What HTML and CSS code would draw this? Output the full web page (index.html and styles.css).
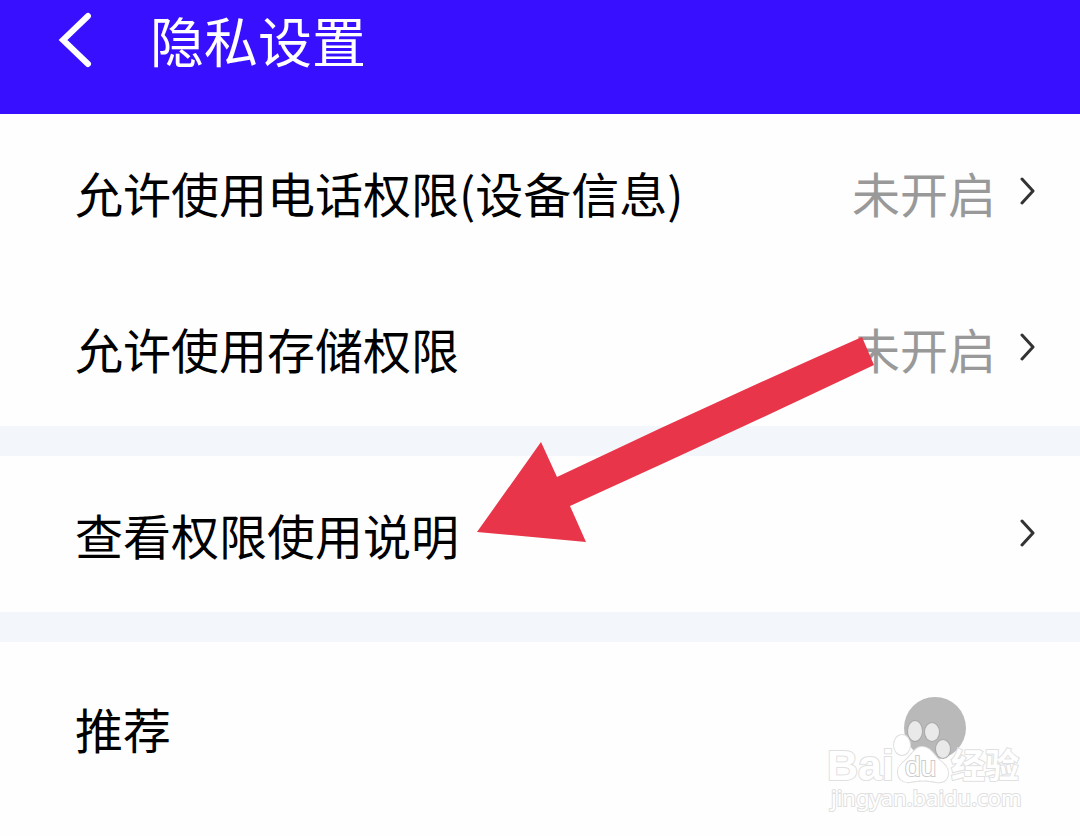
FILE: index.html
```html
<!DOCTYPE html>
<html lang="zh-CN">
<head>
<meta charset="utf-8">
<meta name="viewport" content="width=device-width, initial-scale=1">
<title>隐私设置</title>
<link rel="stylesheet" href="styles.css">
</head>
<body>
<header class="topbar">
  <button class="back" type="button" aria-label="返回">
    <svg class="back-icon" viewBox="0 0 34 56" aria-hidden="true"><path d="M30 4L5 28l25 24"/></svg>
  </button>
  <h1 class="title">隐私设置</h1>
</header>
<main class="settings">
  <section class="group">
    <button class="row" type="button">
      <span class="label">允许使用电话权限(设备信息)</span>
      <span class="status">未开启</span>
      <svg class="chevron" viewBox="0 0 18 30" aria-hidden="true"><path d="M4 2l11 12L4 26"/></svg>
    </button>
    <button class="row" type="button">
      <span class="label">允许使用存储权限</span>
      <span class="status">未开启</span>
      <svg class="chevron" viewBox="0 0 18 30" aria-hidden="true"><path d="M4 2l11 12L4 26"/></svg>
    </button>
  </section>
  <section class="group">
    <button class="row" type="button">
      <span class="label">查看权限使用说明</span>
      <svg class="chevron" viewBox="0 0 18 30" aria-hidden="true"><path d="M4 2l11 12L4 26"/></svg>
    </button>
  </section>
  <section class="group">
    <label class="row row-switch">
      <span class="label">推荐</span>
      <input class="switch" type="checkbox">
    </label>
  </section>
</main>
<svg class="arrow" viewBox="0 0 400 208" aria-hidden="true"><path d="M1 196L65 106L81 141Q232 69 386 1L398 29Q246 101 94 170L110 206Z"/></svg>
<svg class="watermark" viewBox="0 0 200 120" role="img" aria-label="Baidu 经验 jingyan.baidu.com">
  <g class="mark">
    <path d="M92 52c8 0 11 7 16 12c6 5 10 8 10 14c0 8-6 10-12 9c-8-2-18-2-26 0c-8 1-12-4-12-10c0-6 5-9 10-14c5-5 8-11 14-11z"/>
    <ellipse cx="72" cy="50" rx="8" ry="10"/>
    <ellipse class="toe" cx="85" cy="36" rx="7" ry="10"/>
    <ellipse class="toe" cx="102" cy="37" rx="7" ry="9"/>
    <ellipse class="toe" cx="113" cy="54" rx="7" ry="9"/>
  </g>
  <text class="brand" x="-3" y="85">Bai</text>
  <text class="du" x="75" y="81">du</text>
  <text class="jingyan" x="121" y="83">经验</text>
  <text class="site" x="1" y="111">jingyan.baidu.com</text>
</svg>
</body>
</html>
```
FILE: styles.css
```css
* {
  box-sizing: border-box;
}

body {
  position: relative;
  min-height: 100vh;
  margin: 0;
  background: #fefefe;
  color: #000;
  font-family: "Noto Sans CJK SC", "Noto Sans", sans-serif;
  font-weight: 400;
}

button {
  border: 0;
  background: none;
  color: inherit;
  font: inherit;
  text-align: left;
}

.topbar {
  display: flex;
  align-items: center;
  gap: 58px;
  padding: 0 58px 34px;
  background: #3810ff;
  color: #fff;
}

.back {
  display: flex;
  padding: 0;
}

.back-icon {
  width: 34px;
  height: 56px;
  fill: none;
  stroke: #fff;
  stroke-width: 6;
  stroke-linecap: round;
}

.title {
  margin: 0;
  font-size: 54px;
  font-weight: 400;
  line-height: 80px;
}

.settings {
  display: flex;
  flex-direction: column;
  gap: 30px;
  background: #f3f6fa;
}

.group {
  background: #fefefe;
}

.row {
  display: flex;
  align-items: center;
  width: 100%;
  padding: 42px 44px 42px 75px;
  font-size: 48px;
  line-height: 72px;
}

.label {
  flex: 1;
}

.status {
  margin-right: 22px;
  color: #999;
}

.chevron {
  width: 18px;
  height: 30px;
  fill: none;
  stroke: #333;
  stroke-width: 3;
  stroke-linecap: round;
  stroke-linejoin: round;
}

.row-switch {
  padding: 50px 114px 50px 75px;
}

.switch {
  width: 62px;
  height: 62px;
  margin: 0;
  border-radius: 50%;
  appearance: none;
  background: #b9b9b9;
}

.arrow {
  position: absolute;
  top: 336px;
  left: 476px;
  width: 400px;
  height: 208px;
  fill: #e93549;
}

.watermark {
  position: absolute;
  top: 695px;
  left: 830px;
  width: 200px;
  height: 120px;
  overflow: visible;
  pointer-events: none;
  fill: #fff;
  stroke: #e0e0e0;
  stroke-width: 2;
  paint-order: stroke;
}

.toe {
  fill: #e9e9e9;
  stroke: #aaa;
}

.brand,
.du {
  font-family: "Liberation Sans", Arial, sans-serif;
}

.brand {
  font-size: 43px;
  font-weight: 700;
}

.du {
  font-size: 28px;
  stroke: #ccc;
}

.jingyan {
  font-size: 34px;
  font-weight: 700;
}

.site {
  font-family: "Noto Sans", sans-serif;
  font-size: 22px;
  font-weight: 400;
}
```
